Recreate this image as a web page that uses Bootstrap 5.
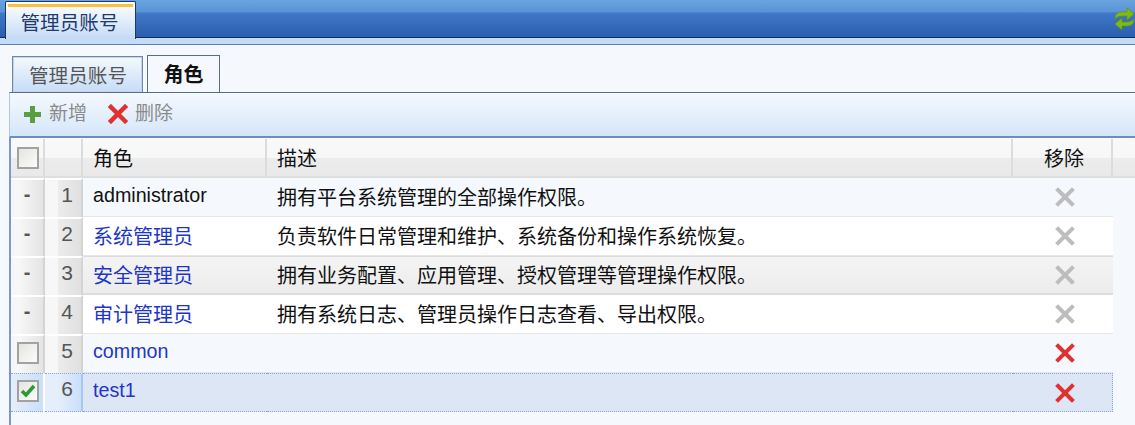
<!DOCTYPE html>
<html lang="zh-CN">
<head>
  <meta charset="UTF-8">
  <title>管理员账号</title>
  <meta name="viewport" content="width=device-width, initial-scale=1">
  <link href="https://cdn.jsdelivr.net/npm/bootstrap@5.3.3/dist/css/bootstrap.min.css" rel="stylesheet">
  <style>
    body {
      font-family: "Liberation Sans", "Noto Sans CJK SC", sans-serif;
      font-size: 20px;
      background-color: #f5f9fe;
      color: #111;
      height: 425px;
      overflow: hidden;
    }

    .top-bar {
      height: 38px;
      padding-left: 5px;
      background: linear-gradient(to bottom, #6ba3de 0, #5a93d6 12px, #3f78c6 13px, #2a5eae 37px);
      border-bottom: 1px solid #0e2c60;
    }

    .top-tab {
      width: 131px;
      height: 38px;
      margin-top: 1px;
      padding: 4px 2px 0 0;
      border: 1px solid #1c3768;
      border-bottom: 0;
      border-top-left-radius: 2px;
      border-top-right-radius: 2px;
      background: linear-gradient(to bottom, #fff, #c4dbf5);
      color: #203a70;
      font-size: 19.6px;
      line-height: 32px;
      text-align: center;
    }

    .top-tab::before {
      content: "";
      display: block;
      height: 3px;
      margin: -2px 0 0 2px;
      background-color: #fbc13e;
    }

    .refresh-icon {
      flex-shrink: 0;
      width: 21px;
      height: 24px;
      margin-top: 7px;
    }

    .sub-strip {
      height: 7px;
      background-color: #c5dcf6;
      border-bottom: 1px solid #5c7fb6;
    }

    .tab-row {
      padding: 10px 0 0 12px;
      gap: 4px;
      height: 47px;
    }

    .tab-off, .tab-on {
      padding-top: 4px;
      line-height: 31px;
      text-align: center;
      border: 1px solid #6f87ab;
      border-bottom: 0;
    }

    .tab-off {
      width: 131px;
      height: 36px;
      padding-left: 1px;
      background: linear-gradient(to bottom, #f5f9fe, #c6dcf6);
      box-shadow: inset 0 0 0 1px #c3d3e8;
      color: #555;
      font-size: 19.6px;
    }

    .tab-on {
      width: 73px;
      height: 37px;
      background-color: #f5f9fe;
      font-weight: 700;
      position: relative;
      z-index: 1;
      border-color: #566d90;
    }

    .main-panel {
      margin-left: 9px;
      height: 334px;
      border-left: 2px solid #7d98c4;
    }

    .tool-bar {
      height: 46px;
      margin-left: -2px;
      padding: 0 0 1px 13px;
      gap: 21px;
      border-top: 1px solid #566d90;
      border-left: 1px solid #b4c5de;
      border-bottom: 2px solid #6c8dc2;
      background: linear-gradient(to bottom, #f5f9fe, #d5e6f9);
      color: #8a8a8a;
      font-size: 19px;
    }

    .tool-item {
      gap: 7px;
    }

    .role-table {
      width: 1124px;
      margin: 1px 0 0 0;
      table-layout: fixed;
      border-collapse: separate;
      border-spacing: 0;
    }

    .role-table th, .role-table td {
      padding: 0;
      border: 0;
      box-shadow: none;
      background: transparent;
      color: #111;
      font-weight: 400;
      line-height: 1.2;
      vertical-align: middle;
    }

    .role-table th {
      height: 39px;
      padding: 3px 0 0 10px;
      background: linear-gradient(to bottom, #f9f9f9 0, #f7f7f7 50%, #ececec 51%, #e9e9e9 100%);
      border-right: 2px solid #dcdcdc;
      border-bottom: 2px solid #dedede;
    }

    .role-table th.cell-check, .role-table th.cell-num {
      padding: 1px 0 0;
    }

    .role-table th.cell-rest {
      padding: 0;
      border-right: 0;
    }

    .role-table th.cell-remove {
      padding-left: 4px;
      text-align: center;
    }

    .role-table td {
      height: 39px;
      border-bottom: 1px solid #e6e6e6;
      padding: 2px 0 0 10px;
    }

    .role-table td.cell-rest {
      border: 0;
      padding: 0;
    }

    .role-table td.cell-remove {
      padding: 0 0 0 4px;
    }

    .role-table td.cell-check, .role-table td.cell-num {
      padding: 0;
      border-right: 2px solid #d4d4d4;
      border-bottom: 0;
      background: linear-gradient(to right, #f7f7f7 25%, #e4e4e4 100%);
      border-top: 2px solid #fff;
      text-align: center;
      color: #555;
    }

    .role-table td.cell-num {
      text-align: right;
      padding: 0 8px 8px 0;
      font-size: 21px;
      line-height: 1;
      background: linear-gradient(to right, #f7f7f7 35%, #ececec 36%, #e0e0e0 100%);
    }

    .role-table td.cell-latin {
      padding: 0 0 3px 10px;
      font-size: 19.7px;
    }

    .role-table tr.row-tint td.cell-main { background-color: #f5f9fe; }
    .role-table tr.row-white td.cell-main { background-color: #fff; }
    .role-table tr.row-hover td.cell-main {
      background: linear-gradient(to bottom, #f4f4f4, #ececec);
      border-top: 1px solid #dcdcdc;
      border-bottom: 2px solid #dcdcdc;
    }

    .role-table tr.row-picked td {
      border-top: 1px dotted #8ba3d6;
      border-bottom: 1px dotted #8ba3d6;
    }

    .role-table tr.row-picked td.cell-rest { border: 0; }
    .role-table tr.row-picked td.cell-main { background-color: #dde6f5; }
    .role-table tr.row-picked td.cell-check { background: linear-gradient(to right, #e6eefb, #c9dffa); border-right-color: #fff; }
    .role-table tr.row-picked td.cell-num { background: linear-gradient(to right, #e6eefb 35%, #c9dffa 100%); border-right-color: #a9c8f0; }
    .role-table tr.row-picked td.cell-remove { border-right: 1px dotted #8ba3d6; }

    .role-table a {
      color: #1d35c8;
      text-decoration: none;
    }

    .row-mark {
      display: block;
      font-size: 20px;
      font-weight: 700;
      line-height: 1;
      margin-top: -10px;
    }

    .check-box {
      display: block;
      width: 22px;
      height: 22px;
      margin-left: 6px;
      border: 2px solid #a2a2a2;
      background: linear-gradient(135deg, #e5e5e0, #fbfbf8);
    }

    .role-table td .check-box {
      margin-top: -3px;
    }

    .check-box svg {
      display: block;
      width: 18px;
      height: 18px;
    }

    .x-icon {
      display: block;
      width: 20px;
      height: 20px;
      margin: 0 auto;
    }

    .x-gray { color: #bdbdbd; }
    .x-red { color: #e03030; }
  </style>
</head>
<body>

  <div class="top-bar d-flex justify-content-between">
    <div class="top-tab">管理员账号</div>
    <svg class="refresh-icon" viewBox="0 0 21 24">
      <path d="M1 12c0-4 2-7 7-7h5V1l7 6-7 6V9H8c-3 0-5 1-7 3z" fill="#7fbb12" stroke="#5f950a" stroke-width=".7"/>
      <path d="M20 12c0 4-2 7-7 7H8v4l-7-6 7-6v4h5c3 0 5-1 7-3z" fill="#7fbb12" stroke="#5f950a" stroke-width=".7"/>
    </svg>
  </div>
  <div class="sub-strip"></div>

  <div class="tab-row d-flex align-items-end">
    <div class="tab-off">管理员账号</div>
    <div class="tab-on">角色</div>
  </div>

  <div class="main-panel">
    <div class="tool-bar d-flex align-items-center">
      <div class="tool-item d-flex align-items-center">
        <svg width="19" height="19" viewBox="0 0 19 19"><path d="M7 1h5v6h6v5h-6v6H7v-6H1V7h6z" fill="#5a9e3e"/></svg>
        <span>新增</span>
      </div>
      <div class="tool-item d-flex align-items-center">
        <svg width="20" height="20" viewBox="0 0 20 20"><path d="M3 3l14 14M17 3L3 17" stroke="#e03030" stroke-width="4.500" stroke-linecap="square" fill="none"/></svg>
        <span>删除</span>
      </div>
    </div>

    <table class="table role-table">
      <colgroup>
        <col style="width: 34px">
        <col style="width: 38px">
        <col style="width: 184px">
        <col style="width: 746px">
        <col style="width: 100px">
        <col style="width: 22px">
      </colgroup>
      <thead>
        <tr>
          <th class="cell-check"><span class="check-box"></span></th>
          <th class="cell-num"></th>
          <th>角色</th>
          <th>描述</th>
          <th class="cell-remove">移除</th>
          <th class="cell-rest"></th>
        </tr>
      </thead>
      <tbody>
        <tr class="row-tint">
          <td class="cell-check"><span class="row-mark">-</span></td>
          <td class="cell-num">1</td>
          <td class="cell-main cell-latin">administrator</td>
          <td class="cell-main">拥有平台系统管理的全部操作权限。</td>
          <td class="cell-main cell-remove"><svg class="x-icon x-gray" viewBox="0 0 20 20"><path d="M3 3l14 14M17 3L3 17" stroke="currentColor" stroke-width="4" stroke-linecap="square"/></svg></td>
          <td class="cell-rest"></td>
        </tr>
        <tr class="row-white">
          <td class="cell-check"><span class="row-mark">-</span></td>
          <td class="cell-num">2</td>
          <td class="cell-main"><a href="#">系统管理员</a></td>
          <td class="cell-main">负责软件日常管理和维护、系统备份和操作系统恢复。</td>
          <td class="cell-main cell-remove"><svg class="x-icon x-gray" viewBox="0 0 20 20"><path d="M3 3l14 14M17 3L3 17" stroke="currentColor" stroke-width="4" stroke-linecap="square"/></svg></td>
          <td class="cell-rest"></td>
        </tr>
        <tr class="row-hover">
          <td class="cell-check"><span class="row-mark">-</span></td>
          <td class="cell-num">3</td>
          <td class="cell-main"><a href="#">安全管理员</a></td>
          <td class="cell-main">拥有业务配置、应用管理、授权管理等管理操作权限。</td>
          <td class="cell-main cell-remove"><svg class="x-icon x-gray" viewBox="0 0 20 20"><path d="M3 3l14 14M17 3L3 17" stroke="currentColor" stroke-width="4" stroke-linecap="square"/></svg></td>
          <td class="cell-rest"></td>
        </tr>
        <tr class="row-white">
          <td class="cell-check"><span class="row-mark">-</span></td>
          <td class="cell-num">4</td>
          <td class="cell-main"><a href="#">审计管理员</a></td>
          <td class="cell-main">拥有系统日志、管理员操作日志查看、导出权限。</td>
          <td class="cell-main cell-remove"><svg class="x-icon x-gray" viewBox="0 0 20 20"><path d="M3 3l14 14M17 3L3 17" stroke="currentColor" stroke-width="4" stroke-linecap="square"/></svg></td>
          <td class="cell-rest"></td>
        </tr>
        <tr class="row-tint">
          <td class="cell-check"><span class="check-box"></span></td>
          <td class="cell-num">5</td>
          <td class="cell-main cell-latin"><a href="#">common</a></td>
          <td class="cell-main"></td>
          <td class="cell-main cell-remove"><svg class="x-icon x-red" viewBox="0 0 20 20"><path d="M3 3l14 14M17 3L3 17" stroke="currentColor" stroke-width="4" stroke-linecap="square"/></svg></td>
          <td class="cell-rest"></td>
        </tr>
        <tr class="row-picked">
          <td class="cell-check"><span class="check-box"><svg viewBox="0 0 18 18"><path d="M3 9l4 4 8-9" fill="none" stroke="#2a9a34" stroke-width="3.500"/></svg></span></td>
          <td class="cell-num">6</td>
          <td class="cell-main cell-latin"><a href="#">test1</a></td>
          <td class="cell-main"></td>
          <td class="cell-main cell-remove"><svg class="x-icon x-red" viewBox="0 0 20 20"><path d="M3 3l14 14M17 3L3 17" stroke="currentColor" stroke-width="4" stroke-linecap="square"/></svg></td>
          <td class="cell-rest"></td>
        </tr>
      </tbody>
    </table>
  </div>

  <script src="https://cdn.jsdelivr.net/npm/bootstrap@5.3.3/dist/js/bootstrap.bundle.min.js"></script>
</body>
</html>
